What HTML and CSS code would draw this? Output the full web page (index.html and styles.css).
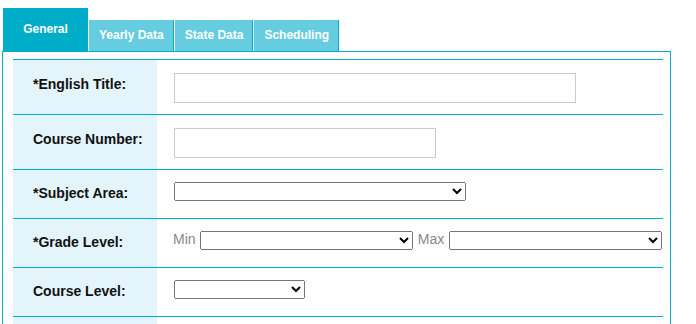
FILE: index.html
```html
<!DOCTYPE html>
<html lang="en">
<head>
    <meta charset="UTF-8">
    <title>Course Details</title>
    <link rel="stylesheet" href="styles.css">
</head>
<body>
    <div class="course-editor">
        <ul class="tabs">
            <li class="tab active">General</li>
            <li class="tab">Yearly Data</li>
            <li class="tab">State Data</li>
            <li class="tab">Scheduling</li>
        </ul>
        <div class="panel">
            <table class="form-table">
                <tr class="row-tall">
                    <th>*English Title:</th>
                    <td><input type="text" class="input-long"></td>
                </tr>
                <tr class="row-tall">
                    <th>Course Number:</th>
                    <td><input type="text" class="input-short"></td>
                </tr>
                <tr>
                    <th>*Subject Area:</th>
                    <td><select class="select-subject"><option></option></select></td>
                </tr>
                <tr>
                    <th>*Grade Level:</th>
                    <td>
                        <span class="range-label">Min</span>
                        <select class="select-grade"><option></option></select>
                        <span class="range-label">Max</span>
                        <select class="select-grade"><option></option></select>
                    </td>
                </tr>
                <tr>
                    <th>Course Level:</th>
                    <td><select class="select-level"><option></option></select></td>
                </tr>
                <tr>
                    <th></th>
                    <td></td>
                </tr>
            </table>
        </div>
    </div>
</body>
</html>
```

FILE: styles.css
```css
body {
    margin: 0;
    font-family: "Liberation Sans", Arial, sans-serif;
    background: #fff;
}
.course-editor {
    margin: 8px 0 0 2px;
    width: 669px;
}
.tabs {
    display: flex;
    align-items: flex-end;
    list-style: none;
    margin: 0;
    padding: 0 0 0 1px;
}
.tab {
    height: 31px;
    box-sizing: border-box;
    padding: 8px 9px 0 10px;
    margin-right: 1px;
    line-height: 14px;
    font-size: 12px;
    font-weight: bold;
    color: #fff;
    background-color: #66cde0;
    border-right: 1px solid #00adc8;
}
.tab.active {
    height: 43px;
    width: 85px;
    padding: 14px 0 0;
    text-align: center;
    background-color: #00adc8;
    border-right: none;
}
.panel {
    border: 1px solid #00adc8;
    padding: 7px 6px 20px 10px;
}
.form-table {
    width: 650px;
    border-collapse: collapse;
}
.form-table tr {
    height: 49px;
    border-top: 1px solid #00adc8;
}
.form-table tr.row-tall {
    height: 55px;
}
.form-table tr.row-tall th {
    padding-bottom: 6px;
}
.form-table th {
    width: 124px;
    padding: 0 0 2px 20px;
    text-align: left;
    font-size: 14px;
    color: #111;
    background-color: #e3f5fa;
}
.form-table td {
    padding: 0 0 0 17px;
    font-size: 13px;
}
input {
    height: 30px;
    box-sizing: border-box;
    border: 1px solid #ccc;
    vertical-align: middle;
    margin: 1px 0 0;
}
.input-long {
    width: 402px;
}
.input-short {
    width: 262px;
}
select {
    height: 19px;
    font-family: "Liberation Sans", Arial, sans-serif;
    font-size: 13px;
    vertical-align: middle;
    margin: 0 0 5px;
}
.select-subject {
    width: 292px;
}
.select-grade {
    width: 213px;
}
.select-level {
    width: 131px;
}
.range-label {
    margin: 0 1px 0 -1px;
    font-size: 14px;
    color: #888;
    vertical-align: 3px;
}
.select-grade + .range-label {
    margin-left: 1px;
}
```
